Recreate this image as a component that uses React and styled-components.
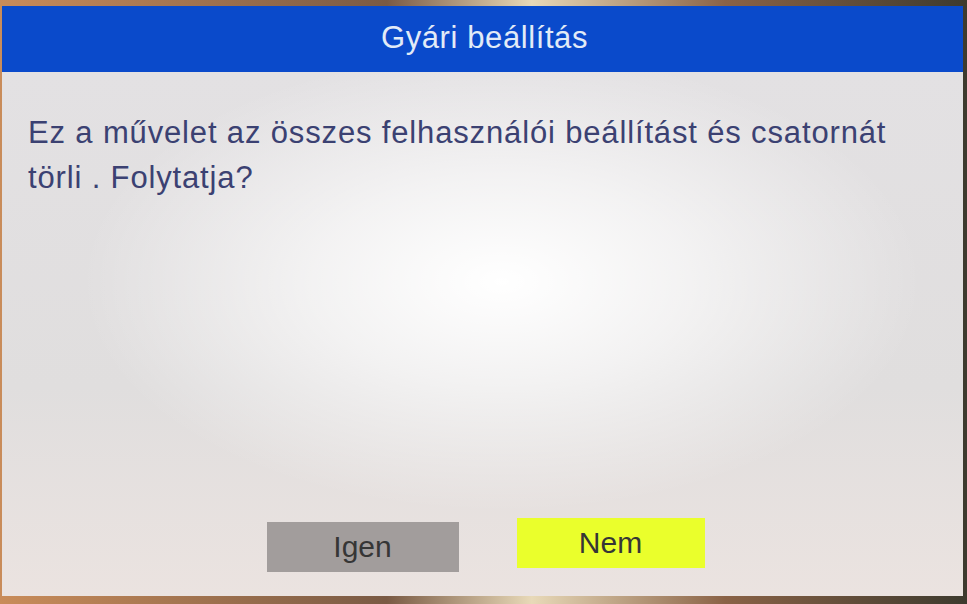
import React from 'react';
import styled, { createGlobalStyle } from 'styled-components';

const GlobalStyle = createGlobalStyle`
    html, body {
        margin: 0;
        padding: 0;
        width: 967px;
        height: 604px;
        overflow: hidden;
    }
    body {
        font-family: "Liberation Sans", Arial, sans-serif;
    }
`;

const Frame = styled.div`
    width: 967px;
    height: 604px;
    box-sizing: border-box;
    padding: 6px 4px 8px 2px;
    display: flex;
    background: linear-gradient(to right, #c98c5a 0%, #7a5a44 40%, #e8d9b8 55%, #8a6246 75%, #3d3a2e 100%);
`;

const Screen = styled.div`
    flex: 1;
    display: flex;
    flex-direction: column;
    overflow: hidden;
`;

const TitleBar = styled.div`
    height: 66px;
    flex-shrink: 0;
    display: flex;
    align-items: center;
    justify-content: center;
    background: #0a4acb;
    color: #e2ebf7;
    font-size: 31px;
    letter-spacing: 0.6px;
    padding: 0 0 2px 4px;
    box-sizing: border-box;
`;

const Body = styled.div`
    flex: 1;
    display: flex;
    flex-direction: column;
    padding: 38px 20px 26px 26px;
    background:
        radial-gradient(ellipse 420px 230px at 52% 40%, #ffffff 0%, rgba(255, 255, 255, 0.6) 45%, rgba(255, 255, 255, 0) 100%),
        linear-gradient(to bottom, #e3e1e3 0%, #e0dede 60%, #ebe3e0 100%);
`;

const Message = styled.p`
    margin: 0;
    font-size: 31px;
    line-height: 45px;
    letter-spacing: 0.85px;
    color: #3b4172;
`;

const ButtonRow = styled.div`
    margin-top: auto;
    display: flex;
    justify-content: center;
    gap: 58px;
`;

const Button = styled.div`
    width: ${({ $wide }) => $wide}px;
    height: 50px;
    display: flex;
    align-items: center;
    justify-content: center;
    font-size: 30px;
    color: #363636;
    background: ${({ $active }) => ($active ? '#eaff2c' : '#a29d9c')};
    transform: translateY(${({ $active }) => ($active ? -2 : 2)}px);
`;

export default function App() {
    return (
        <>
            <GlobalStyle />
            <Frame>
                <Screen>
                    <TitleBar>Gyári beállítás</TitleBar>
                    <Body>
                        <Message>
                            Ez a művelet az összes felhasználói beállítást és csatornát
                            <br />
                            törli . Folytatja?
                        </Message>
                        <ButtonRow>
                            <Button $wide={192}>Igen</Button>
                            <Button $wide={188} $active>Nem</Button>
                        </ButtonRow>
                    </Body>
                </Screen>
            </Frame>
        </>
    );
}
